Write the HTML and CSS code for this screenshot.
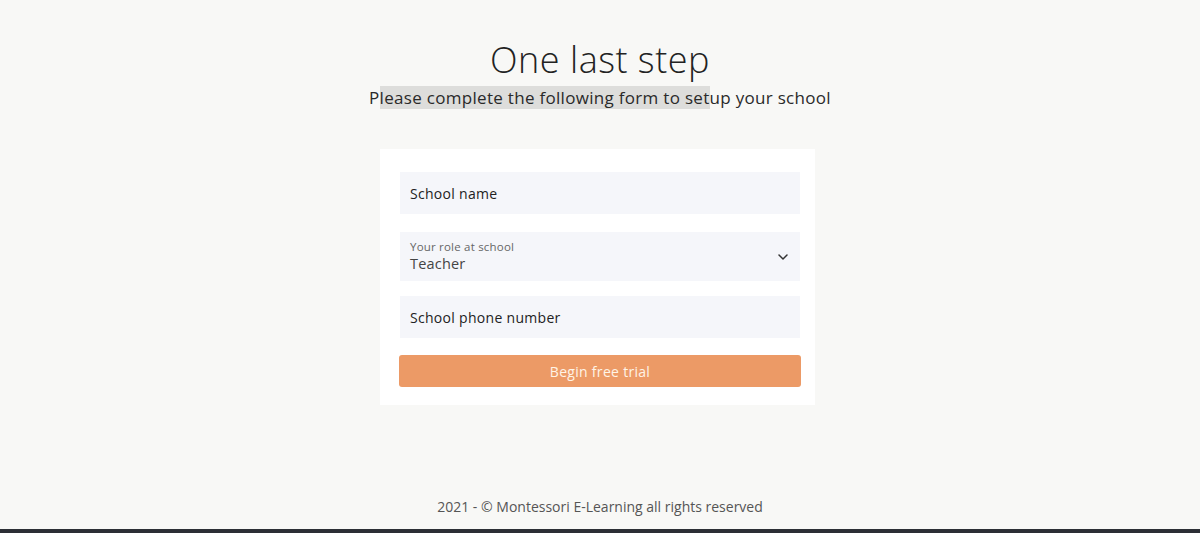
FILE: index.html
```html
<!DOCTYPE html>
<html lang="en">
<head>
<meta charset="utf-8">
<title>One last step</title>
<link rel="stylesheet" href="styles.css">
</head>
<body>
<div class="page">
  <main class="main">
    <h1 class="title">One last step</h1>
    <p class="subtitle">P<span class="sel">lease complete the following form to set</span>up your school</p>
    <form class="card">
      <div class="field"><span class="field-text">School name</span></div>
      <div class="field select">
        <div class="select-body">
          <span class="field-label">Your role at school</span>
          <span class="field-value">Teacher</span>
        </div>
        <svg class="chev" width="10" height="6" viewBox="0 0 10 6"><path d="M1 1l4 4 4-4" fill="none" stroke="#333" stroke-width="1.5" stroke-linecap="round" stroke-linejoin="round"/></svg>
      </div>
      <div class="field phone"><span class="field-text">School phone number</span></div>
      <button type="button" class="btn">Begin free trial</button>
    </form>
  </main>
  <footer class="footer">2021 - © Montessori E-Learning all rights reserved</footer>
  <div class="bottom-bar"></div>
</div>
</body>
</html>
```

FILE: styles.css
```css
* { box-sizing: border-box; }
html, body { margin: 0; padding: 0; }
body {
  background: #f8f8f6;
  font-family: "Open Sans", "Liberation Sans", sans-serif;
  color: #222;
}
.page {
  height: 533px;
  display: flex;
  flex-direction: column;
}
.main {
  flex: 1;
  display: flex;
  flex-direction: column;
  align-items: center;
}
.title {
  margin: 38px 0 0;
  font-size: 36px;
  font-weight: 300;
  line-height: 44px;
  color: #222;
  letter-spacing: 0.5px;
}
.subtitle {
  margin: 3px 0 0;
  font-size: 17px;
  line-height: 25px;
  color: #2a2a2a;
  letter-spacing: 0.3px;
}
.sel { background: #dddddb; }
.card {
  margin-top: 39px;
  width: 435px;
  margin-left: -5px;
  background: #fff;
  padding: 23px 15px 18px 19px;
  display: flex;
  flex-direction: column;
  gap: 18px;
}
.field {
  background: #f5f6fa;
  height: 42px;
  display: flex;
  align-items: center;
  padding: 0 10px;
  width: 400px;
  margin-left: 1px;
}
.field-text { font-size: 14px; color: #222; letter-spacing: 0.3px; }
.select { height: 49px; justify-content: space-between; padding-right: 12px; }
.phone { margin-top: -3px; }
.select-body { display: flex; flex-direction: column; }
.field-label { font-size: 11.5px; color: #666; line-height: 14px; letter-spacing: 0.2px; }
.field-value { font-size: 14.5px; color: #444; line-height: 20px; letter-spacing: 0.2px; }
.btn {
  margin-top: -1px;
  height: 32px;
  width: 402px;
  border: 0;
  border-radius: 3px;
  background: #ec9a66;
  color: #fff4e6;
  font-family: inherit;
  font-size: 14px;
  letter-spacing: 0.3px;
}
.footer {
  text-align: center;
  font-size: 14px;
  color: #555;
  padding-bottom: 13px;
}
.bottom-bar { height: 4px; background: #2c2f35; }
```
